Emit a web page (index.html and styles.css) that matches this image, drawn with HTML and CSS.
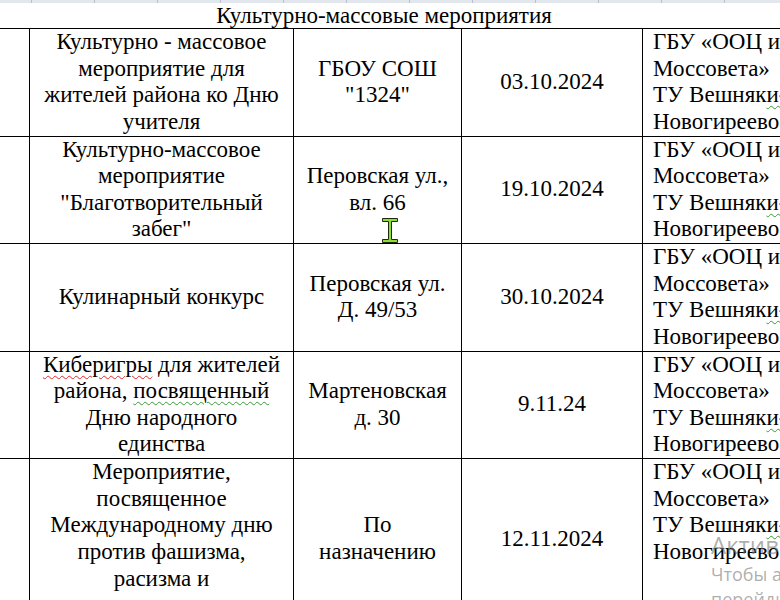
FILE: index.html
```html
<!DOCTYPE html>
<html lang="ru">
<head>
<meta charset="utf-8">
<title>Культурно-массовые мероприятия</title>
<link rel="stylesheet" href="styles.css">
</head>
<body>
<div class="ruler"></div>
<div class="title">Культурно-массовые мероприятия</div>
<table class="events">
  <colgroup>
    <col class="c-num"><col class="c-name"><col class="c-place"><col class="c-date"><col class="c-org">
  </colgroup>
  <tbody>
    <tr>
      <td class="num"></td>
      <td class="name">Культурно - массовое<br>мероприятие для<br>жителей района ко Дню<br>учителя</td>
      <td class="place">ГБОУ СОШ<br>"1324"</td>
      <td class="date">03.10.2024</td>
      <td class="org">ГБУ «ООЦ им.<br>Моссовета»<br>ТУ Вешняк<span class="grammar">и-</span><br>Новогиреево</td>
    </tr>
    <tr>
      <td class="num"></td>
      <td class="name">Культурно-массовое<br>мероприятие<br>"Благотворительный<br>забег"</td>
      <td class="place">Перовская ул.,<br>вл. 66</td>
      <td class="date">19.10.2024</td>
      <td class="org">ГБУ «ООЦ им.<br>Моссовета»<br>ТУ Вешняк<span class="grammar">и-</span><br>Новогиреево</td>
    </tr>
    <tr>
      <td class="num"></td>
      <td class="name">Кулинарный конкурс</td>
      <td class="place">Перовская ул.<br>Д. 49/53</td>
      <td class="date">30.10.2024</td>
      <td class="org">ГБУ «ООЦ им.<br>Моссовета»<br>ТУ Вешняк<span class="grammar">и-</span><br>Новогиреево</td>
    </tr>
    <tr>
      <td class="num"></td>
      <td class="name"><span class="spell">Киберигры</span> для жителей<br>района, <span class="grammar">посвященный</span><br>Дню народного<br>единства</td>
      <td class="place">Мартеновская<br>д. 30</td>
      <td class="date">9.11.24</td>
      <td class="org">ГБУ «ООЦ им.<br>Моссовета»<br>ТУ Вешняк<span class="grammar">и-</span><br>Новогиреево</td>
    </tr>
    <tr>
      <td class="num"></td>
      <td class="name">Мероприятие,<br>посвященное<br>Международному дню<br>против фашизма,<br>расизма и<br>антисемитизма</td>
      <td class="place">По<br>назначению</td>
      <td class="date">12.11.2024</td>
      <td class="org">ГБУ «ООЦ им.<br>Моссовета»<br>ТУ Вешняк<span class="grammar">и-</span><br>Новогиреево</td>
    </tr>
  </tbody>
</table>

<svg class="cursor" width="16" height="26" viewBox="0 0 16 26" aria-hidden="true">
  <path d="M0.5 0.5H15.5V3.5H9.5V21.5H15.5V24.5H0.5V21.5H6.5V3.5H0.5Z" fill="#8fdd2c" stroke="#1f2a12" stroke-width="1"/>
</svg>

<div class="activation">
  <div class="act-title">Активация Windows</div>
  <div class="act-text">Чтобы активировать Windows,<br>перейдите в раздел "Параметры".</div>
</div>
</body>
</html>
```

FILE: styles.css
```css
html, body {
  margin: 0;
  padding: 0;
  background: #ffffff;
}

body {
  width: 780px;
  height: 600px;
  overflow: hidden;
  position: relative;
  font-family: "Liberation Serif", "Times New Roman", serif;
  font-size: 23px;
  color: #000;
}

.ruler {
  height: 3px;
  background-color: #e2e7ee;
  background-image: linear-gradient(to right, transparent 0 62px, #b7c0cc 62px 63px);
  background-size: 63px 3px;
  background-position: -31px 0;
}

.title {
  height: 25px;
  line-height: 25px;
  text-align: center;
  padding-right: 12px;
  white-space: nowrap;
}

.events {
  border-collapse: collapse;
  table-layout: fixed;
  width: 848px;
  margin-left: -40px;
}

.c-num { width: 69px; }
.c-name { width: 264px; }
.c-place { width: 168px; }
.c-date { width: 181px; }
.c-org { width: 166px; }

.events td {
  border: 1px solid #000;
  padding: 0;
  line-height: 26.625px;
  white-space: nowrap;
  vertical-align: middle;
  text-align: center;
}

.events td.org {
  text-align: left;
  vertical-align: top;
  padding-left: 10px;
}

.spell {
  text-decoration: underline wavy #e0282a;
  text-decoration-thickness: 1px;
  text-underline-offset: 3px;
}

.grammar {
  text-decoration: underline wavy #3a9a3a;
  text-decoration-thickness: 1px;
  text-underline-offset: 3px;
}

.cursor {
  position: absolute;
  left: 382px;
  top: 218px;
}

.activation {
  position: absolute;
  left: 711px;
  top: 530px;
  color: rgba(120, 120, 120, 0.6);
  font-family: "Open Sans", "Noto Sans", sans-serif;
  white-space: nowrap;
}

.act-title {
  font-size: 24px;
  line-height: 30px;
}

.act-text {
  font-size: 18px;
  line-height: 25px;
  margin-top: 2px;
}
```
